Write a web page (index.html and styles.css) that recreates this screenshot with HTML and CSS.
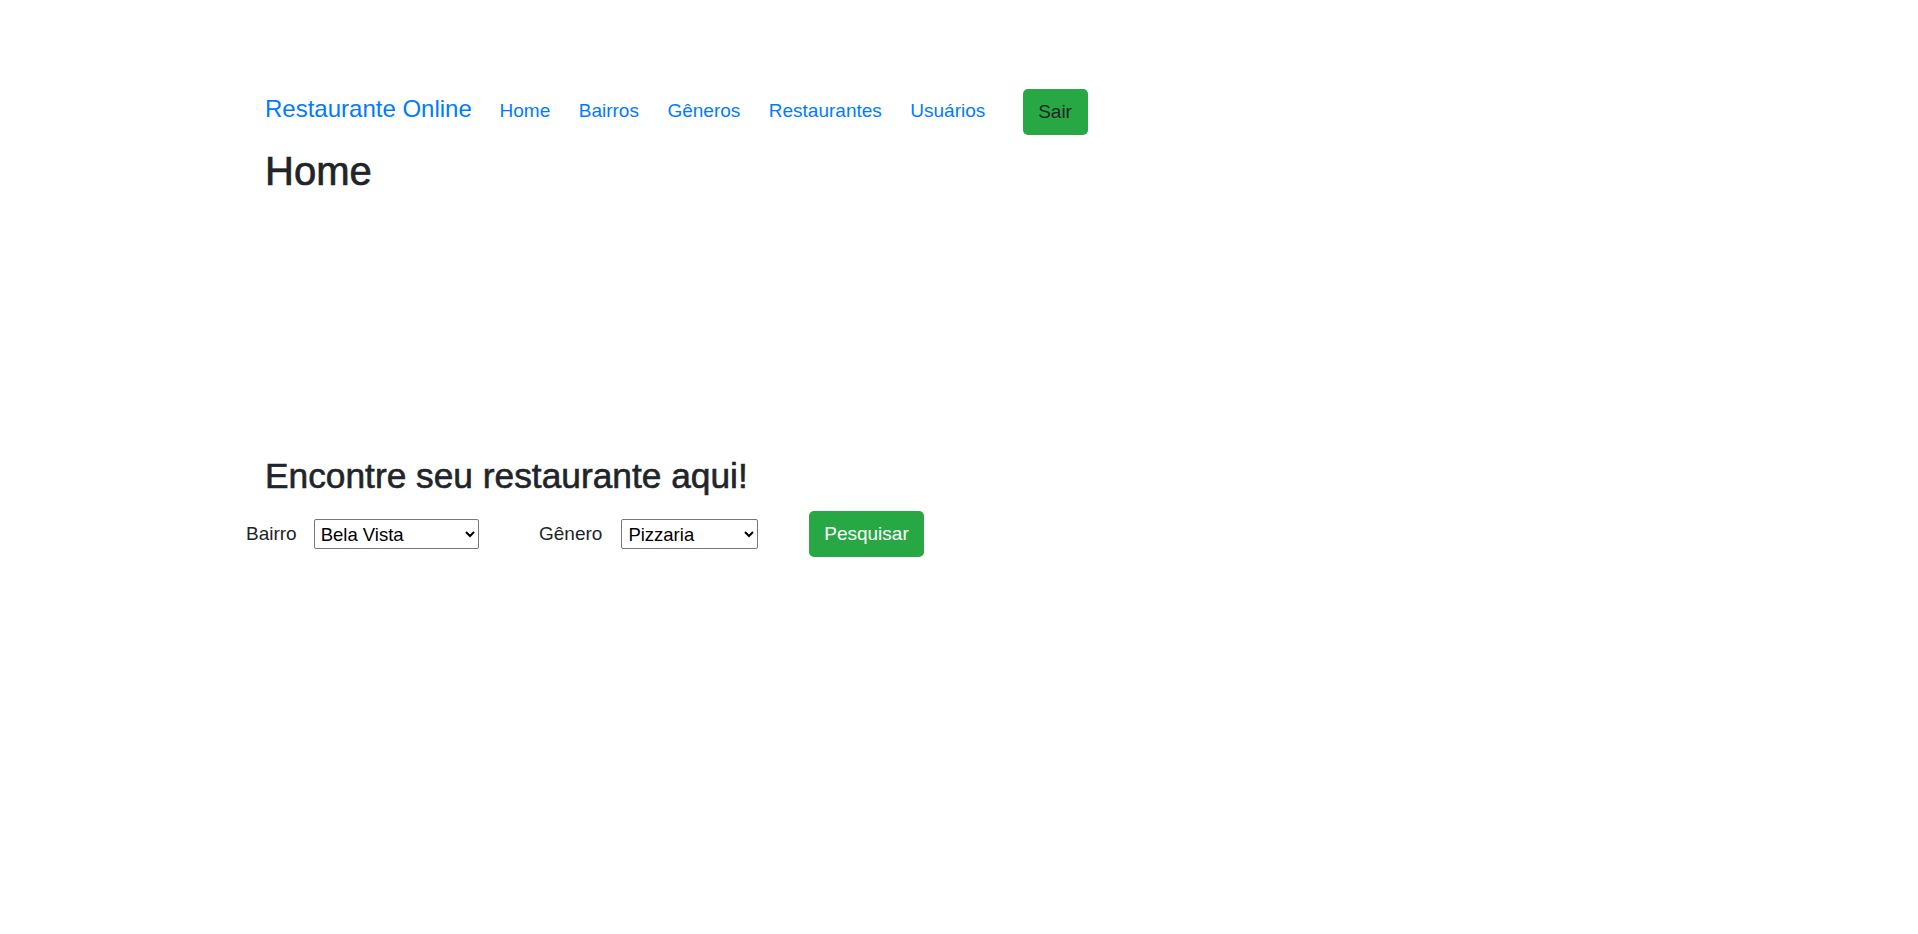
FILE: index.html
```html
<!DOCTYPE html>
<html lang="pt-BR">
<head>
<meta charset="utf-8">
<title>Restaurante Online</title>
<link rel="stylesheet" href="styles.css">
</head>
<body>
<div class="container">
  <nav class="navbar">
    <a class="brand" href="#">Restaurante Online</a>
    <ul class="nav-links">
      <li><a href="#">Home</a></li>
      <li><a href="#">Bairros</a></li>
      <li><a href="#">Gêneros</a></li>
      <li><a href="#">Restaurantes</a></li>
      <li><a href="#">Usuários</a></li>
    </ul>
    <button class="btn btn-exit" type="button">Sair</button>
  </nav>
  <h1 class="page-title">Home</h1>

  <h2 class="section-title">Encontre seu restaurante aqui!</h2>
  <form class="search-form">
    <div class="field field-bairro">
      <label for="bairro">Bairro</label>
      <select id="bairro" class="select select-bairro">
        <option>Bela Vista</option>
        <option>Centro</option>
      </select>
    </div>
    <div class="field field-genero">
      <label for="genero">Gênero</label>
      <select id="genero" class="select select-genero">
        <option>Pizzaria</option>
        <option>Japonês</option>
      </select>
    </div>
    <button class="btn btn-search" type="button">Pesquisar</button>
  </form>
</div>
</body>
</html>
```

FILE: styles.css
```css
* { box-sizing: border-box; }

body {
  margin: 0;
  background: #fff;
  color: #212529;
  font-family: "Liberation Sans", Arial, sans-serif;
}

.container {
  width: 1388px;
  margin: 0 auto;
}

.navbar {
  display: flex;
  align-items: center;
  height: 46px;
  margin-top: 89px;
}

.brand {
  color: #007bff;
  text-decoration: none;
  font-size: 24px;
  line-height: 36px;
  margin-right: 13.5px;
  margin-bottom: 7px;
}

.nav-links {
  display: flex;
  list-style: none;
  margin: 0 0 2px;
  padding: 0;
}

.nav-links a {
  display: block;
  color: #007bff;
  text-decoration: none;
  font-size: 19px;
  line-height: 30px;
  padding: 0 14.25px;
}

.btn {
  border: none;
  border-radius: 5px;
  background: #28a745;
  font-family: inherit;
  font-size: 19px;
  height: 46px;
  cursor: pointer;
}

.btn-exit {
  margin-left: 23px;
  width: 65px;
  color: #212529;
  padding: 0;
}

.page-title {
  margin: 12px 0 0;
  font-size: 40px;
  line-height: 48px;
  font-weight: 400;
  -webkit-text-stroke: 0.7px #212529;
}

.section-title {
  margin: 260px 0 0;
  font-size: 35.3px;
  line-height: 41px;
  font-weight: 400;
  -webkit-text-stroke: 0.6px #212529;
}

.search-form {
  display: flex;
  align-items: center;
  margin: 15px 0 0 -19px;
}

.field {
  display: flex;
  align-items: center;
}

.field-bairro { width: 293px; }
.field-genero { width: 270px; }

.field label {
  font-size: 19px;
  margin-right: 17px;
}

.field-genero label {
  margin-right: 19px;
}

.select {
  height: 30px;
  font-family: inherit;
  font-size: 18.5px;
  color: #000;
  background: #fff;
  border: 1px solid #767676;
  border-radius: 2px;
  padding: 0 2px;
}

.select-bairro { width: 165px; }
.select-genero { width: 137px; }

.btn-search {
  width: 115px;
  color: #fff;
  padding: 0;
}
```
